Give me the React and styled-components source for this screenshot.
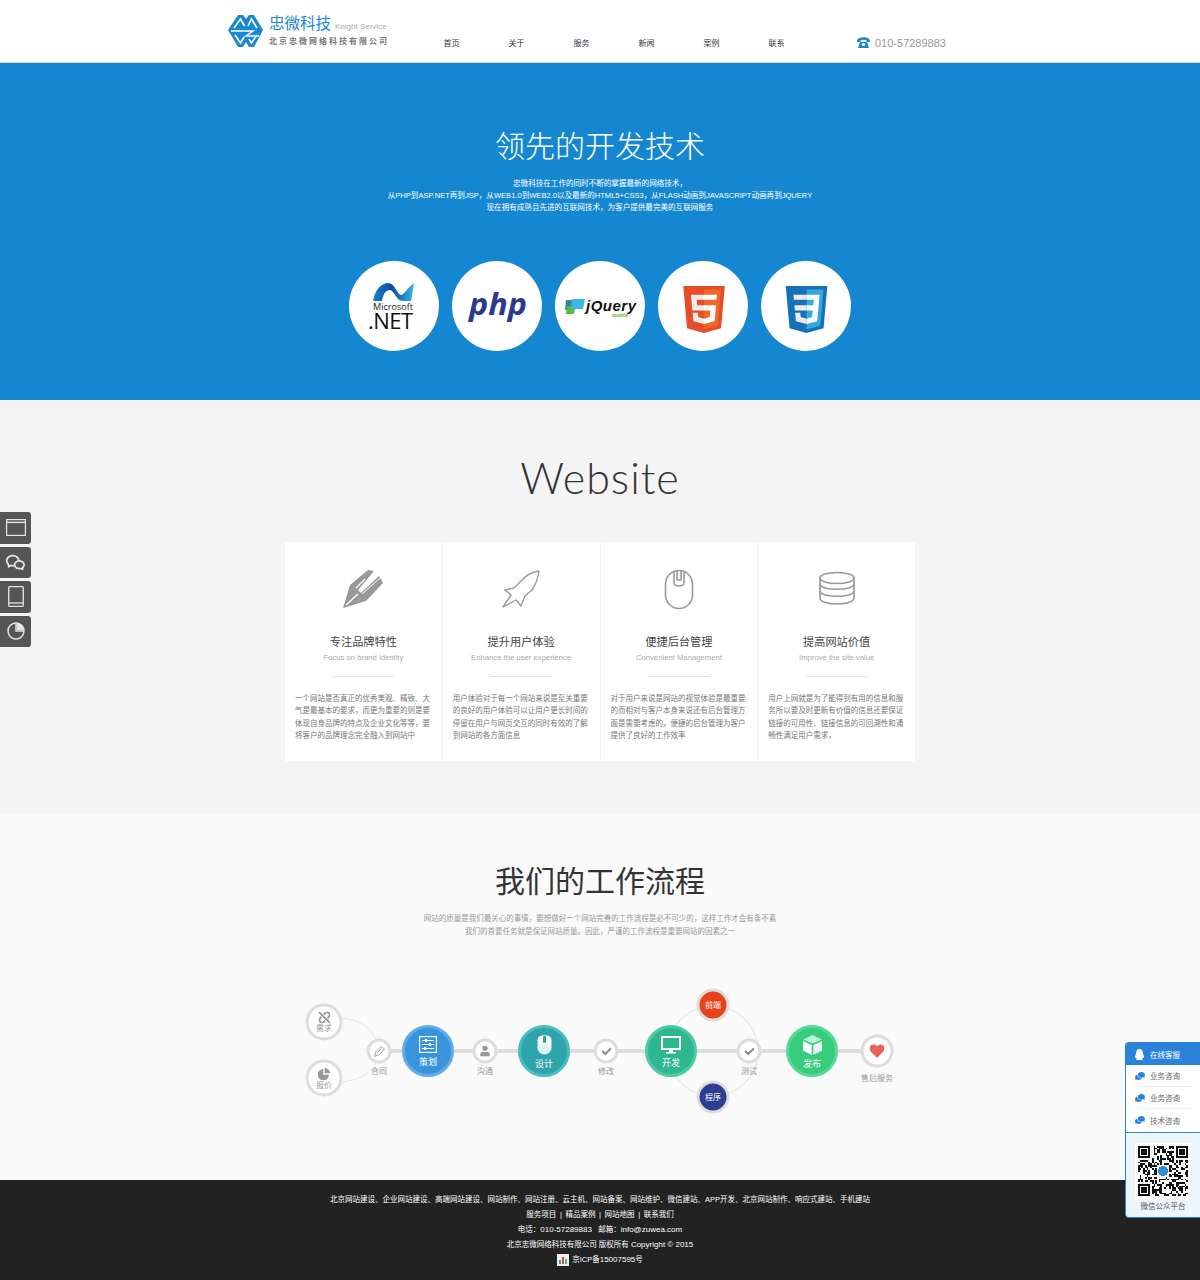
import React from "react";
import styled, { createGlobalStyle } from "styled-components";
import { FaCheck, FaComments, FaHeart, FaQq, FaUnlink, FaUser } from "react-icons/fa";
import { RiWechatLine } from "react-icons/ri";

const Global = createGlobalStyle`
	html, body {
		margin: 0;
		padding: 0;
		background: #fff;
		font-family: "Liberation Sans", "Noto Sans CJK SC", sans-serif;
	}
	* { box-sizing: border-box; }
`;

const shield = "M71 460 L30 0 H482 L441 460 L255 512 Z";
const halfShield = "M256 472 L405 431 L440 37 H256 Z";

const LogoMark = () => (
	<svg width="36" height="34" viewBox="0 0 36 34">
		<path d="M0 16 L10 1 H15 L18 5 L21 1 H26 L35 16 L26 33 H21 L18 28 L15 33 H10 Z" fill="#1a88d2" />
		<g fill="none" stroke="#fff" strokeWidth="1.6">
			<path d="M6 14 L12.5 5 L16.5 12" />
			<path d="M20 12 L23.5 5 L29 14" />
			<path d="M3 17 H25 L18 22 H31" strokeWidth="1.4" />
			<path d="M7 21 L12.5 29 L16 23" />
			<path d="M21 25 L23.5 29 L29 21" />
		</g>
	</svg>
);

const PhoneIcon = () => (
	<svg width="13" height="13" viewBox="0 0 13 13" fill="#1a88d2">
		<path d="M0 5 C0 0 13 0 13 5 V6 H9.5 V4.4 C8 3.6 5 3.6 3.5 4.4 V6 H0 Z" />
		<path d="M3 6 H10 L12 12 H1 Z" />
		<circle cx="6.5" cy="8.6" r="1.7" fill="#fff" />
	</svg>
);

const DotNetLogo = () => (
	<svg width="90" height="90" viewBox="0 0 90 90">
		<defs>
			<linearGradient id="net" x1="0" x2="1">
				<stop offset="0" stopColor="#1584d4" />
				<stop offset="0.45" stopColor="#0a4d9c" />
				<stop offset="1" stopColor="#35b6ea" />
			</linearGradient>
		</defs>
		<path
			d="M24 40 C26 28 33 22 39 22 C46 22 47 32 52 34 C55 34 58 27 65 22 L62 40 H54 C47 40 46 30 41 29 C36 29 34 34 33 40 Z"
			fill="url(#net)"
		/>
		<text x="24" y="49" fontFamily="Open Sans" fontSize="9" fill="#222" textLength="40">Microsoft</text>
		<text x="19" y="68" fontFamily="Open Sans" fontSize="22" fill="#111" textLength="45">.NET</text>
	</svg>
);

const PhpLogo = () => (
	<svg width="90" height="90" viewBox="0 0 90 90">
		<text
			x="17"
			y="54"
			fontFamily="Open Sans"
			fontStyle="italic"
			fontWeight="700"
			fontSize="31"
			fill="#2c3a8a"
			textLength="58"
			lengthAdjust="spacingAndGlyphs">
			php
		</text>
	</svg>
);

const JqueryLogo = () => (
	<svg width="90" height="90" viewBox="0 0 90 90">
		<path d="M11 39 H21 L20 49 H10 Z" fill="#2e8b8f" />
		<path d="M12 45 H20 L19 53 H11 Z" fill="#58b947" />
		<path d="M17 38 H30 L28 48 H16 Z" fill="#3fb4e6" />
		<text x="31" y="50" fontFamily="Liberation Sans" fontStyle="italic" fontWeight="700" fontSize="15" fill="#111" textLength="50">jQuery</text>
		<text x="57" y="56" fontFamily="Liberation Sans" fontStyle="italic" fontWeight="700" fontSize="5" fill="#6cb52d">mobile</text>
	</svg>
);

const Html5Logo = () => (
	<svg width="90" height="90" viewBox="0 0 90 90">
		<g transform="translate(22.5 25) scale(0.092)">
			<path d="M71 460 L30 0 H482 L441 460 L255 512 Z" fill="#e44d26" />
			<path d={halfShield} fill="#f16529" />
			<path d="M256 208 H181 L176 150 H256 V94 H114 L129 265 H256 Z M256 355 L192 338 L188 292 H132 L140 382 L256 414 Z" fill="#ebebeb" />
			<path d="M255 208 V265 H325 L318 338 L255 355 V414 L371 382 L387 208 Z M255 94 V150 H392 L397 94 Z" fill="#fff" />
		</g>
	</svg>
);

const Css3Logo = () => (
	<svg width="90" height="90" viewBox="0 0 90 90">
		<g transform="translate(22 25) scale(0.092)">
			<path d={shield} fill="#1572b6" />
			<path d={halfShield} fill="#33a9dc" />
			<path d="M114 94 L119 150 H256 V94 Z M124 208 L129 265 H256 V208 Z M256 355 L192 338 L188 292 H132 L140 382 L256 414 Z" fill="#ebebeb" />
			<path d="M256 94 V150 H335 L329 208 H256 V265 H324 L317 338 L256 355 V414 L371 382 L398 94 Z" fill="#fff" />
		</g>
	</svg>
);

const PenIcon = () => (
	<svg width="40" height="38" viewBox="0 0 40 38">
		<path d="M0 38 L7 15 L25 0 L31 1 L15 20 L18 23 L36 6 L40 13 L23 31 Z" fill="#999" />
		<path d="M3 35 L15 24 M22 9 L13 18" stroke="#fff" strokeWidth="1.3" />
		<path d="M19 24 L37 8" stroke="#fff" strokeWidth="1" />
	</svg>
);

const RocketIcon = () => (
	<svg width="40" height="38" viewBox="0 0 40 38" fill="none" stroke="#999" strokeWidth="1.4">
		<path d="M38 1 C30 2 24 6 19 12 L13 18 L4 20 L10 25 L2 37 L15 30 L20 36 L24 26 L31 20 C35 14 37 8 38 1 Z" strokeLinejoin="round" />
	</svg>
);

const MouseIcon = () => (
	<svg width="30" height="41" viewBox="0 0 30 41" fill="none" stroke="#999" strokeWidth="1.6">
		<rect x="1.5" y="1.5" width="27" height="38" rx="13.5" />
		<path d="M10 2 V14 C10 18 20 18 20 14 V2" />
		<path d="M13 2 V11 H17 V2" />
	</svg>
);

const DatabaseIcon = () => (
	<svg width="38" height="36" viewBox="0 0 38 36" fill="none" stroke="#999" strokeWidth="1.6">
		<ellipse cx="19" cy="7" rx="17" ry="5.5" />
		<path d="M2 7 V13 C2 20 36 20 36 13 V7" />
		<path d="M2 13 V20 C2 27 36 27 36 20 V13" />
		<path d="M2 20 V27 C2 35 36 35 36 27 V20" />
	</svg>
);

const WindowIcon = () => (
	<svg width="20" height="17" viewBox="0 0 20 17" fill="none" stroke="#e4e4e4" strokeWidth="1.2">
		<rect x="0.6" y="0.6" width="18.8" height="15.8" />
		<path d="M1 3.4 H19" strokeWidth="1.4" />
	</svg>
);

const TabletIcon = () => (
	<svg width="16" height="21" viewBox="0 0 16 21" fill="none" stroke="#e4e4e4" strokeWidth="1.3">
		<rect x="0.7" y="0.7" width="14.6" height="19.6" rx="1" />
		<path d="M1 17 H15" />
	</svg>
);

const PieIcon = ({ color = "#e4e4e4", size = 18 }) => (
	<svg width={size} height={size} viewBox="0 0 18 18" fill="none" stroke={color} strokeWidth="1.5">
		<circle cx="9" cy="9" r="8" />
		<path d="M9 1 V9 H17" />
		<path d="M10 1 A8 8 0 0 1 17 8 H10 Z" fill={color} stroke="none" />
	</svg>
);

const SolidPie = () => (
	<svg width="13" height="13" viewBox="0 0 13 13" fill="#999">
		<path d="M5.8 1.6 V7.2 H11.4 A5.6 5.6 0 1 1 5.8 1.6 Z" />
		<path d="M7.2 0.4 A5.6 5.6 0 0 1 12.6 5.8 H7.2 Z" />
	</svg>
);

const PencilIcon = () => (
	<svg width="12" height="12" viewBox="0 0 12 12" fill="none" stroke="#999" strokeWidth="0.9">
		<path d="M1 11 L2.5 6 L7.5 1 L11 3.5 L6 9 Z M4 7 L8 3" />
	</svg>
);

const SlidersIcon = () => (
	<svg width="18" height="17" viewBox="0 0 18 17" fill="none" stroke="#fff" strokeWidth="1.1">
		<rect x="0.6" y="0.6" width="16.8" height="15.8" />
		<path d="M3 4.5 H15 M3 8.5 H15 M3 12.5 H15" />
		<path d="M7 3 V6 M11 7 V10 M6 11 V14" strokeWidth="2" />
	</svg>
);

const FilledMouse = () => (
	<svg width="15" height="20" viewBox="0 0 15 20">
		<rect x="0.5" y="0.5" width="14" height="19" rx="7" fill="#dff6f6" />
		<rect x="0.5" y="0.5" width="14" height="9" rx="5" fill="#fff" />
		<rect x="6" y="1" width="3" height="7" rx="1" fill="#2fa5ab" />
	</svg>
);

const MonitorIcon = () => (
	<svg width="20" height="18" viewBox="0 0 20 18">
		<rect x="0" y="0" width="20" height="14" fill="#fff" />
		<rect x="2" y="2" width="16" height="10" fill="#2fb88f" />
		<path d="M8 14 H12 V16 H15 V17.5 H5 V16 H8 Z" fill="#fff" />
	</svg>
);

const CubeIcon = () => (
	<svg width="19" height="20" viewBox="0 0 19 20">
		<path d="M9.5 0 L19 4.5 L9.5 8.5 L0 4.5 Z" fill="#b8f3d5" />
		<path d="M0 6 L8.7 10 V20 L0 15.5 Z" fill="#fff" />
		<path d="M19 6 L10.3 10 V20 L19 15.5 Z" fill="#e6fbf1" />
	</svg>
);

// fake qr matrix, same every render
const buildQr = () => {
	const n = 29;
	let seed = 7331;
	let d = "";
	const inFinder = (x, y) => (x < 8 && y < 8) || (x >= n - 8 && y < 8) || (x < 8 && y >= n - 8);
	for (let y = 0; y < n; y++) {
		for (let x = 0; x < n; x++) {
			seed = (seed * 1103515245 + 12345) & 0x7fffffff;
			if (!inFinder(x, y) && (seed >> 16) % 100 < 52) d += `M${x} ${y}h1v1h-1z`;
		}
	}
	[[0, 0], [n - 7, 0], [0, n - 7]].forEach(([x, y]) => {
		d += `M${x} ${y}h7v7h-7z M${x + 1} ${y + 1}v5h5v-5z M${x + 2} ${y + 2}h3v3h-3z`;
	});
	return d;
};
const qrPath = buildQr();

const QrCode = () => (
	<svg width="50" height="50" viewBox="0 0 29 29" shapeRendering="crispEdges">
		<path d={qrPath} fill="#111" fillRule="evenodd" />
		<rect x="11" y="11" width="7" height="7" fill="#fff" />
		<circle cx="14.5" cy="14.5" r="3" fill="#2a8fd8" />
	</svg>
);

const techLogos = [DotNetLogo, PhpLogo, JqueryLogo, Html5Logo, Css3Logo];
const navItems = ["首页", "关于", "服务", "新闻", "案例", "联系"];

const cards = [
	{
		icon: <PenIcon />,
		title: "专注品牌特性",
		sub: "Focus on brand identity",
		body: "一个网站是否真正的优秀美观、精致、大气是最基本的要求，而更为重要的则是要体现自身品牌的特点及企业文化等等，要将客户的品牌理念完全融入到网站中",
	},
	{
		icon: <RocketIcon />,
		title: "提升用户体验",
		sub: "Enhance the user experience",
		body: "用户体验对于每一个网站来说是至关重要的良好的用户体验可以让用户更长时间的停留在用户与网页交互的同时有效的了解到网站的各方面信息",
	},
	{
		icon: <MouseIcon />,
		title: "便捷后台管理",
		sub: "Convenient Management",
		body: "对于用户来说是网站的视觉体验是最重要的而相对与客户本身来说还有后台管理方面是需要考虑的，便捷的后台管理为客户提供了良好的工作效率",
	},
	{
		icon: <DatabaseIcon />,
		title: "提高网站价值",
		sub: "Improve the site value",
		body: "用户上网就是为了能得到有用的信息和服务所以要及时更新有价值的信息还要保证链接的可用性、链接信息的可回溯性和通畅性满足用户需求，",
	},
];

const flowNodes = [
	{ x: 24, y: 37, size: 37, text: "需求", inner: true, icon: <FaUnlink size={12} color="#999" /> },
	{ x: 24, y: 93, size: 37, text: "报价", inner: true, icon: <SolidPie /> },
	{ x: 79, y: 66, size: 25, text: "合同", icon: <PencilIcon /> },
	{ x: 128, y: 66, size: 52, text: "策划", bg: "#3a94dc", ring: "#62ade9", icon: <SlidersIcon /> },
	{ x: 185, y: 66, size: 25, text: "沟通", icon: <FaUser size={11} color="#999" /> },
	{ x: 244, y: 66, size: 52, text: "设计", bg: "#2fa5ab", ring: "#45bec2", icon: <FilledMouse /> },
	{ x: 306, y: 66, size: 25, text: "修改", icon: <FaCheck size={10} color="#888" /> },
	{ x: 371, y: 66, size: 52, text: "开发", bg: "#2fb88f", ring: "#4dc9a3", icon: <MonitorIcon /> },
	{ x: 449, y: 66, size: 25, text: "测试", icon: <FaCheck size={10} color="#888" /> },
	{ x: 512, y: 66, size: 52, text: "发布", bg: "#35cc7c", ring: "#58da94", icon: <CubeIcon /> },
	{ x: 577, y: 66, size: 33, text: "售后服务", gap: 9, icon: <FaHeart size={15} color="#e8625c" /> },
	{ x: 413, y: 20, size: 33, text: "前端", small: true, bg: "#e8431c", ring: "#ddd" },
	{ x: 413, y: 112, size: 33, text: "程序", small: true, bg: "#2f3f8f", ring: "#ddd" },
];

const App = () => {
	return (
		<Page>
			<Global />
			<Header>
				<Brand>
					<LogoMark />
					<BrandText>
						<BrandTop>
							<BrandName>忠微科技</BrandName>
							<BrandEn>Knight Service</BrandEn>
						</BrandTop>
						<BrandSub>北京忠微网络科技有限公司</BrandSub>
					</BrandText>
				</Brand>
				<Nav>
					{navItems.map((item) => (
						<NavItem key={item}>{item}</NavItem>
					))}
				</Nav>
				<Phone>
					<PhoneIcon />
					<span>010-57289883</span>
				</Phone>
			</Header>

			<Hero>
				<HeroTitle>领先的开发技术</HeroTitle>
				<HeroText>
					忠微科技在工作的同时不断的掌握最新的网络技术，
					<br />
					从PHP到ASP.NET再到JSP，从WEB1.0到WEB2.0以及最新的HTML5+CSS3，从FLASH动画到JAVASCRIPT动画再到JQUERY
					<br />
					现在拥有成熟且先进的互联网技术，为客户提供最完美的互联网服务
				</HeroText>
				<TechRow>
					{techLogos.map((Logo, i) => (
						<TechBadge key={i}>
							<Logo />
						</TechBadge>
					))}
				</TechRow>
			</Hero>

			<Website>
				<WebsiteTitle>Website</WebsiteTitle>
				<CardGrid>
					{cards.map((card) => (
						<Card key={card.title}>
							<CardIcon>{card.icon}</CardIcon>
							<CardTitle>{card.title}</CardTitle>
							<CardSub>{card.sub}</CardSub>
							<CardRule />
							<CardBody>{card.body}</CardBody>
						</Card>
					))}
				</CardGrid>
			</Website>

			<Process>
				<ProcessTitle>我们的工作流程</ProcessTitle>
				<ProcessText>
					网站的质量是我们最关心的事情，要想做好一个网站完善的工作流程是必不可少的，这样工作才会有条不紊
					<br />
					我们的首要任务就是保证网站质量。因此，严谨的工作流程是重要网站的因素之一
				</ProcessText>
				<Stage>
					<StageLines width="600" height="130" viewBox="0 0 600 130" fill="none">
						<path d="M79 66 H577" stroke="#ddd" strokeWidth="4" />
						<path d="M42 33 Q68 36 76 54 M42 97 Q68 94 76 78" stroke="#e6e6e6" strokeWidth="1" />
						<circle cx="413" cy="66" r="45" stroke="#e8e8e8" strokeWidth="1.2" />
					</StageLines>
					{flowNodes.map((node) => (
						<FlowNode
							key={node.text}
							$x={node.x}
							$y={node.y}
							$size={node.size}
							$bg={node.bg}
							$ring={node.ring}>
							{node.icon}
							{node.small && <SmallNodeText>{node.text}</SmallNodeText>}
							{node.bg && !node.small && <BigNodeText>{node.text}</BigNodeText>}
							{node.inner && <InnerNodeText>{node.text}</InnerNodeText>}
							{!node.bg && !node.inner && <NodeCaption $gap={node.gap || 6}>{node.text}</NodeCaption>}
						</FlowNode>
					))}
				</Stage>
			</Process>

			<Footer>
				<div>北京网站建设、企业网站建设、高端网站建设、网站制作、网站注册、云主机、网站备案、网站维护、微信建站、APP开发、北京网站制作、响应式建站、手机建站</div>
				<FooterLinks>服务项目 | 精品案例 | 网站地图 | 联系我们</FooterLinks>
				<div>电话：<Latin>010-57289883</Latin> &nbsp; 邮箱：<Latin>info@zuwea.com</Latin></div>
				<div>北京忠微网络科技有限公司 版权所有 <Latin>Copyright © 2015</Latin></div>
				<IcpLine>
					<IcpBadge>
						<IcpBar $h={4} $c="#3a94dc" />
						<IcpBar $h={7} $c="#e8431c" />
						<IcpBar $h={5} $c="#35cc7c" />
					</IcpBadge>
					<span>京ICP备<Latin>15007595</Latin>号</span>
				</IcpLine>
			</Footer>

			<SideTabs>
				<SideTab><WindowIcon /></SideTab>
				<SideTab><RiWechatLine size={21} color="#e4e4e4" /></SideTab>
				<SideTab><TabletIcon /></SideTab>
				<SideTab><PieIcon /></SideTab>
			</SideTabs>

			<ServicePanel>
				<ServiceHead>
					<FaQq size={11} color="#fff" />
					在线客服
				</ServiceHead>
				<ServiceList>
					{["业务咨询", "业务咨询", "技术咨询"].map((item, i) => (
						<ServiceRow key={i}>
							<ChatIcon />
							{item}
						</ServiceRow>
					))}
				</ServiceList>
				<QrBlock>
					<QrBox>
						<QrCode />
					</QrBox>
					<QrLabel>微信公众平台</QrLabel>
				</QrBlock>
			</ServicePanel>
		</Page>
	);
};

export default App;

const Page = styled.div`
	width: 1200px;
	position: relative;
`;

const Header = styled.header`
	height: 63px;
	display: flex;
	padding-left: 228px;
	background: #fff;
	border-bottom: 1px solid #d4d8dc;
`;
const Brand = styled.div`
	width: 191px;
	display: flex;
	gap: 5px;
	padding-top: 14px;
`;
const BrandText = styled.div`
	display: flex;
	flex-direction: column;
`;
const BrandTop = styled.div`
	display: flex;
	align-items: flex-end;
	gap: 4px;
	height: 20px;
`;
const BrandName = styled.span`
	font-size: 15.5px;
	line-height: 20px;
	color: #1a88d2;
`;
const BrandEn = styled.span`
	font-size: 8px;
	line-height: 15px;
	color: #aaa;
`;
const BrandSub = styled.div`
	margin-top: 2px;
	font-family: "Noto Sans CJK SC", sans-serif;
	font-size: 8px;
	font-weight: 700;
	line-height: 10px;
	letter-spacing: 2px;
	color: #777;
	white-space: nowrap;
`;
const Nav = styled.nav`
	display: flex;
	padding-top: 37px;
`;
const NavItem = styled.a`
	width: 65px;
	font-size: 8px;
	line-height: 14px;
	text-align: center;
	color: #333;
`;
const Phone = styled.div`
	margin-left: 48px;
	padding-top: 36px;
	display: flex;
	align-items: flex-start;
	gap: 5px;
	font-size: 11px;
	line-height: 14px;
	color: #999;
`;

const Hero = styled.section`
	height: 337px;
	padding-top: 64px;
	background: #1587d1;
	color: #fff;
	text-align: center;
`;
const HeroTitle = styled.h1`
	margin: 0;
	font-size: 30px;
	font-weight: 300;
	line-height: 40px;
`;
const HeroText = styled.p`
	margin: 11px 0 0;
	font-size: 7.57px;
	line-height: 12px;
`;
const TechRow = styled.div`
	margin-top: 47px;
	display: flex;
	justify-content: center;
	gap: 13px;
`;
const TechBadge = styled.div`
	width: 90px;
	height: 90px;
	border-radius: 50%;
	background: #fff;
	svg {
		display: block;
	}
`;

const Website = styled.section`
	height: 413px;
	padding-top: 53px;
	background: #f4f4f4;
`;
const WebsiteTitle = styled.h2`
	margin: 0 0 39px;
	font-family: Lato, sans-serif;
	font-size: 43px;
	font-weight: 300;
	line-height: 50px;
	letter-spacing: 1px;
	text-align: center;
	color: #333;
`;
const CardGrid = styled.div`
	width: 630px;
	margin: 0 auto;
	display: grid;
	grid-template-columns: repeat(4, 1fr);
	gap: 1px;
`;
const Card = styled.article`
	height: 219px;
	padding: 28px 10px 0;
	background: #fff;
	text-align: center;
`;
const CardIcon = styled.div`
	height: 38px;
	display: flex;
	align-items: center;
	justify-content: center;
`;
const CardTitle = styled.h3`
	margin: 26px 0 0;
	font-size: 11.2px;
	font-weight: 400;
	line-height: 16px;
	color: #444;
`;
const CardSub = styled.div`
	margin-top: 2px;
	font-size: 7.7px;
	line-height: 12px;
	color: #aaa;
`;
const CardRule = styled.div`
	width: 62px;
	height: 1px;
	margin: 12px auto 0;
	background: #e2e2e2;
`;
const CardBody = styled.p`
	margin: 16px 0 0;
	font-size: 7.5px;
	line-height: 12.4px;
	text-align: left;
	color: #777;
`;

const Process = styled.section`
	height: 367px;
	padding-top: 49px;
	background: #fafafa;
	text-align: center;
`;
const ProcessTitle = styled.h2`
	margin: 0;
	font-size: 30px;
	font-weight: 400;
	line-height: 40px;
	color: #333;
`;
const ProcessText = styled.p`
	margin: 10px 0 0;
	font-size: 7.5px;
	line-height: 13px;
	color: #999;
`;
const Stage = styled.div`
	position: relative;
	width: 600px;
	height: 130px;
	margin: 47px auto 0;
`;
const StageLines = styled.svg`
	position: absolute;
	left: 0;
	top: 0;
`;
const FlowNode = styled.div`
	position: absolute;
	left: ${(p) => p.$x}px;
	top: ${(p) => p.$y}px;
	width: ${(p) => p.$size}px;
	height: ${(p) => p.$size}px;
	transform: translate(-50%, -50%);
	border-radius: 50%;
	border: 3px solid ${(p) => p.$ring || "#ddd"};
	background: ${(p) => p.$bg || "#fff"};
	display: flex;
	flex-direction: column;
	align-items: center;
	justify-content: center;
	svg {
		flex: none;
	}
`;
const BigNodeText = styled.span`
	margin-top: 4px;
	margin-bottom: -2px;
	font-size: 9px;
	line-height: 11px;
	color: #fff;
`;
const SmallNodeText = styled.span`
	font-size: 8px;
	line-height: 10px;
	color: #fff;
`;
const InnerNodeText = styled.span`
	font-size: 8px;
	line-height: 9px;
	color: #999;
`;
const NodeCaption = styled.span`
	position: absolute;
	top: calc(100% + ${(p) => p.$gap}px);
	left: 50%;
	transform: translateX(-50%);
	font-size: 8px;
	line-height: 10px;
	white-space: nowrap;
	color: #999;
`;

const Footer = styled.footer`
	height: 100px;
	padding-top: 12px;
	background: #222;
	color: #fff;
	font-size: 7.5px;
	line-height: 15px;
	text-align: center;
`;
const FooterLinks = styled.div`
	word-spacing: 1.5px;
`;
const Latin = styled.span`
	font-size: 8px;
`;
const IcpLine = styled.div`
	display: flex;
	align-items: center;
	justify-content: center;
	gap: 3px;
`;
const IcpBadge = styled.span`
	width: 12px;
	height: 12px;
	padding: 2px;
	display: flex;
	align-items: flex-end;
	justify-content: space-between;
	background: #eee;
`;
const IcpBar = styled.i`
	width: 2px;
	height: ${(p) => p.$h}px;
	background: ${(p) => p.$c};
`;

const SideTabs = styled.aside`
	position: absolute;
	left: 0;
	top: 512px;
	display: flex;
	flex-direction: column;
	gap: 3px;
`;
const SideTab = styled.div`
	width: 31px;
	height: 31.5px;
	display: flex;
	align-items: center;
	justify-content: center;
	background: #555;
	border-radius: 0 3px 3px 0;
`;

const ServicePanel = styled.aside`
	position: absolute;
	right: 0;
	top: 1042px;
	width: 75px;
	height: 176px;
	border: 1px solid #2b83d9;
	border-right: 0;
	border-radius: 4px 0 0 4px;
	background: #eef6fd;
	overflow: hidden;
`;
const ServiceHead = styled.div`
	height: 22px;
	padding-left: 8px;
	display: flex;
	align-items: center;
	gap: 5px;
	background: #2b83d9;
	color: #fff;
	font-size: 7.5px;
`;
const ServiceList = styled.div`
	background: #fff;
	padding: 0 7px;
	border-bottom: 1px solid #2b83d9;
`;
const ServiceRow = styled.div`
	height: 22.2px;
	display: flex;
	align-items: center;
	gap: 5px;
	padding-left: 2px;
	font-size: 7.5px;
	color: #666;
	border-bottom: 1px solid #eee;
	&:last-child {
		border-bottom: 0;
	}
`;
const ChatIcon = styled(FaComments)`
	width: 10px;
	height: 10px;
	color: #2b83d9;
	transform: scaleX(-1);
`;
const QrBlock = styled.div`
	padding-top: 10px;
	display: flex;
	flex-direction: column;
	align-items: center;
`;
const QrBox = styled.div`
	width: 56px;
	height: 56px;
	display: flex;
	align-items: center;
	justify-content: center;
	background: #fff;
`;
const QrLabel = styled.div`
	margin-top: 3px;
	font-size: 7.5px;
	line-height: 10px;
	color: #555;
`;
